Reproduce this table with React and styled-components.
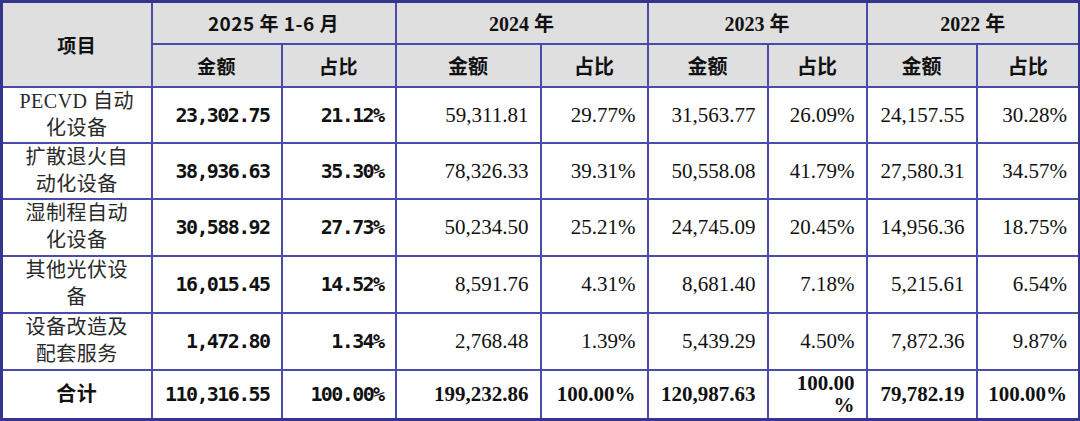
import React from "react";
import styled, { createGlobalStyle } from "styled-components";

const GlobalStyle = createGlobalStyle`
  html, body {
    margin: 0;
    padding: 0;
    background: #ffffff;
  }
`;

const LINE = "#4b4bab";
const OUTER = "#35358f";

const Table = styled.table`
  width: 1080px;
  border-collapse: collapse;
  table-layout: fixed;
  border: 3px solid ${OUTER};
  font-family: "Liberation Serif", "Noto Sans CJK SC", serif;
  color: #111;
`;

const Row = styled.tr`
  height: ${(p) => p.$h}px;
`;

const Head = styled.th`
  background: #dfdfdf;
  border: 2px solid ${LINE};
  padding: 0;
  text-align: center;
  vertical-align: middle;
  font-size: ${(p) => (p.$sans ? "19px" : "20px")};
  font-weight: 700;
  font-family: ${(p) =>
    p.$sans
      ? `"Noto Sans CJK SC", "DejaVu Sans", sans-serif`
      : `"Liberation Serif", "Noto Sans CJK SC", serif`};
  letter-spacing: ${(p) => (p.$sans ? "0.5px" : "0")};
`;

const Label = styled.td`
  border: 2px solid ${LINE};
  padding: 0 4px;
  text-align: center;
  vertical-align: middle;
  font-family: "Liberation Serif", "Noto Sans CJK SC", serif;
  font-size: 20px;
  line-height: 27px;
  font-weight: ${(p) => (p.$bold ? 700 : 400)};
  color: ${(p) => (p.$bold ? "#111" : "#2a2a2a")};
  letter-spacing: 0.5px;
`;

const Num = styled.td`
  border: 2px solid ${LINE};
  padding: 0 11px 0 4px;
  text-align: right;
  vertical-align: middle;
  white-space: nowrap;
  line-height: 22px;
  ${(p) =>
    p.$mono
      ? `
    font-family: "DejaVu Sans Mono", "Liberation Mono", monospace;
    font-size: 20px;
    letter-spacing: -1.6px;
    font-weight: 700;
  `
      : `
    font-family: "Liberation Serif", serif;
    font-size: 21px;
    font-weight: ${p.$bold ? 700 : 400};
  `}
`;

const widths = [150, 130, 114, 145, 107, 120, 99, 110, 103];

const years = [
  { key: "h1", title: "2025 年 1-6 月", sans: true },
  { key: "y2024", title: "2024 年" },
  { key: "y2023", title: "2023 年" },
  { key: "y2022", title: "2022 年" },
];

const rows = [
  {
    label: ["PECVD 自动", "化设备"],
    h1: ["23,302.75", "21.12%"],
    y2024: ["59,311.81", "29.77%"],
    y2023: ["31,563.77", "26.09%"],
    y2022: ["24,157.55", "30.28%"],
    h: 56,
  },
  {
    label: ["扩散退火自", "动化设备"],
    h1: ["38,936.63", "35.30%"],
    y2024: ["78,326.33", "39.31%"],
    y2023: ["50,558.08", "41.79%"],
    y2022: ["27,580.31", "34.57%"],
    h: 56,
  },
  {
    label: ["湿制程自动", "化设备"],
    h1: ["30,588.92", "27.73%"],
    y2024: ["50,234.50", "25.21%"],
    y2023: ["24,745.09", "20.45%"],
    y2022: ["14,956.36", "18.75%"],
    h: 57,
  },
  {
    label: ["其他光伏设", "备"],
    h1: ["16,015.45", "14.52%"],
    y2024: ["8,591.76", "4.31%"],
    y2023: ["8,681.40", "7.18%"],
    y2022: ["5,215.61", "6.54%"],
    h: 57,
  },
  {
    label: ["设备改造及", "配套服务"],
    h1: ["1,472.80", "1.34%"],
    y2024: ["2,768.48", "1.39%"],
    y2023: ["5,439.29", "4.50%"],
    y2022: ["7,872.36", "9.87%"],
    h: 57,
  },
];

const total = {
  label: ["合计"],
  h1: ["110,316.55", "100.00%"],
  y2024: ["199,232.86", "100.00%"],
  y2023: ["120,987.63", ["100.00", "%"]],
  y2022: ["79,782.19", "100.00%"],
  h: 50,
};

const Lines = ({ parts }) =>
  parts.map((t, i) => (
    <React.Fragment key={i}>
      {i > 0 && <br />}
      {t}
    </React.Fragment>
  ));

const DataRow = ({ row, bold }) => (
  <Row $h={row.h}>
    <Label $bold={bold}>
      <Lines parts={row.label} />
    </Label>
    {years.map((y) =>
      row[y.key].map((v, i) => (
        <Num key={y.key + i} $mono={y.sans} $bold={bold}>
          {Array.isArray(v) ? <Lines parts={v} /> : v}
        </Num>
      ))
    )}
  </Row>
);

export default function App() {
  return (
    <>
      <GlobalStyle />
      <Table>
        <colgroup>
          {widths.map((w, i) => (
            <col key={i} style={{ width: w }} />
          ))}
        </colgroup>
        <thead>
          <Row $h={42}>
            <Head rowSpan={2} $sans>
              项目
            </Head>
            {years.map((y) => (
              <Head key={y.key} colSpan={2} $sans={y.sans}>
                {y.title}
              </Head>
            ))}
          </Row>
          <Row $h={43}>
            {years.map((y) => (
              <React.Fragment key={y.key}>
                <Head $sans={y.sans}>金额</Head>
                <Head $sans={y.sans}>占比</Head>
              </React.Fragment>
            ))}
          </Row>
        </thead>
        <tbody>
          {rows.map((r, i) => (
            <DataRow key={i} row={r} />
          ))}
          <DataRow row={total} bold />
        </tbody>
      </Table>
    </>
  );
}
